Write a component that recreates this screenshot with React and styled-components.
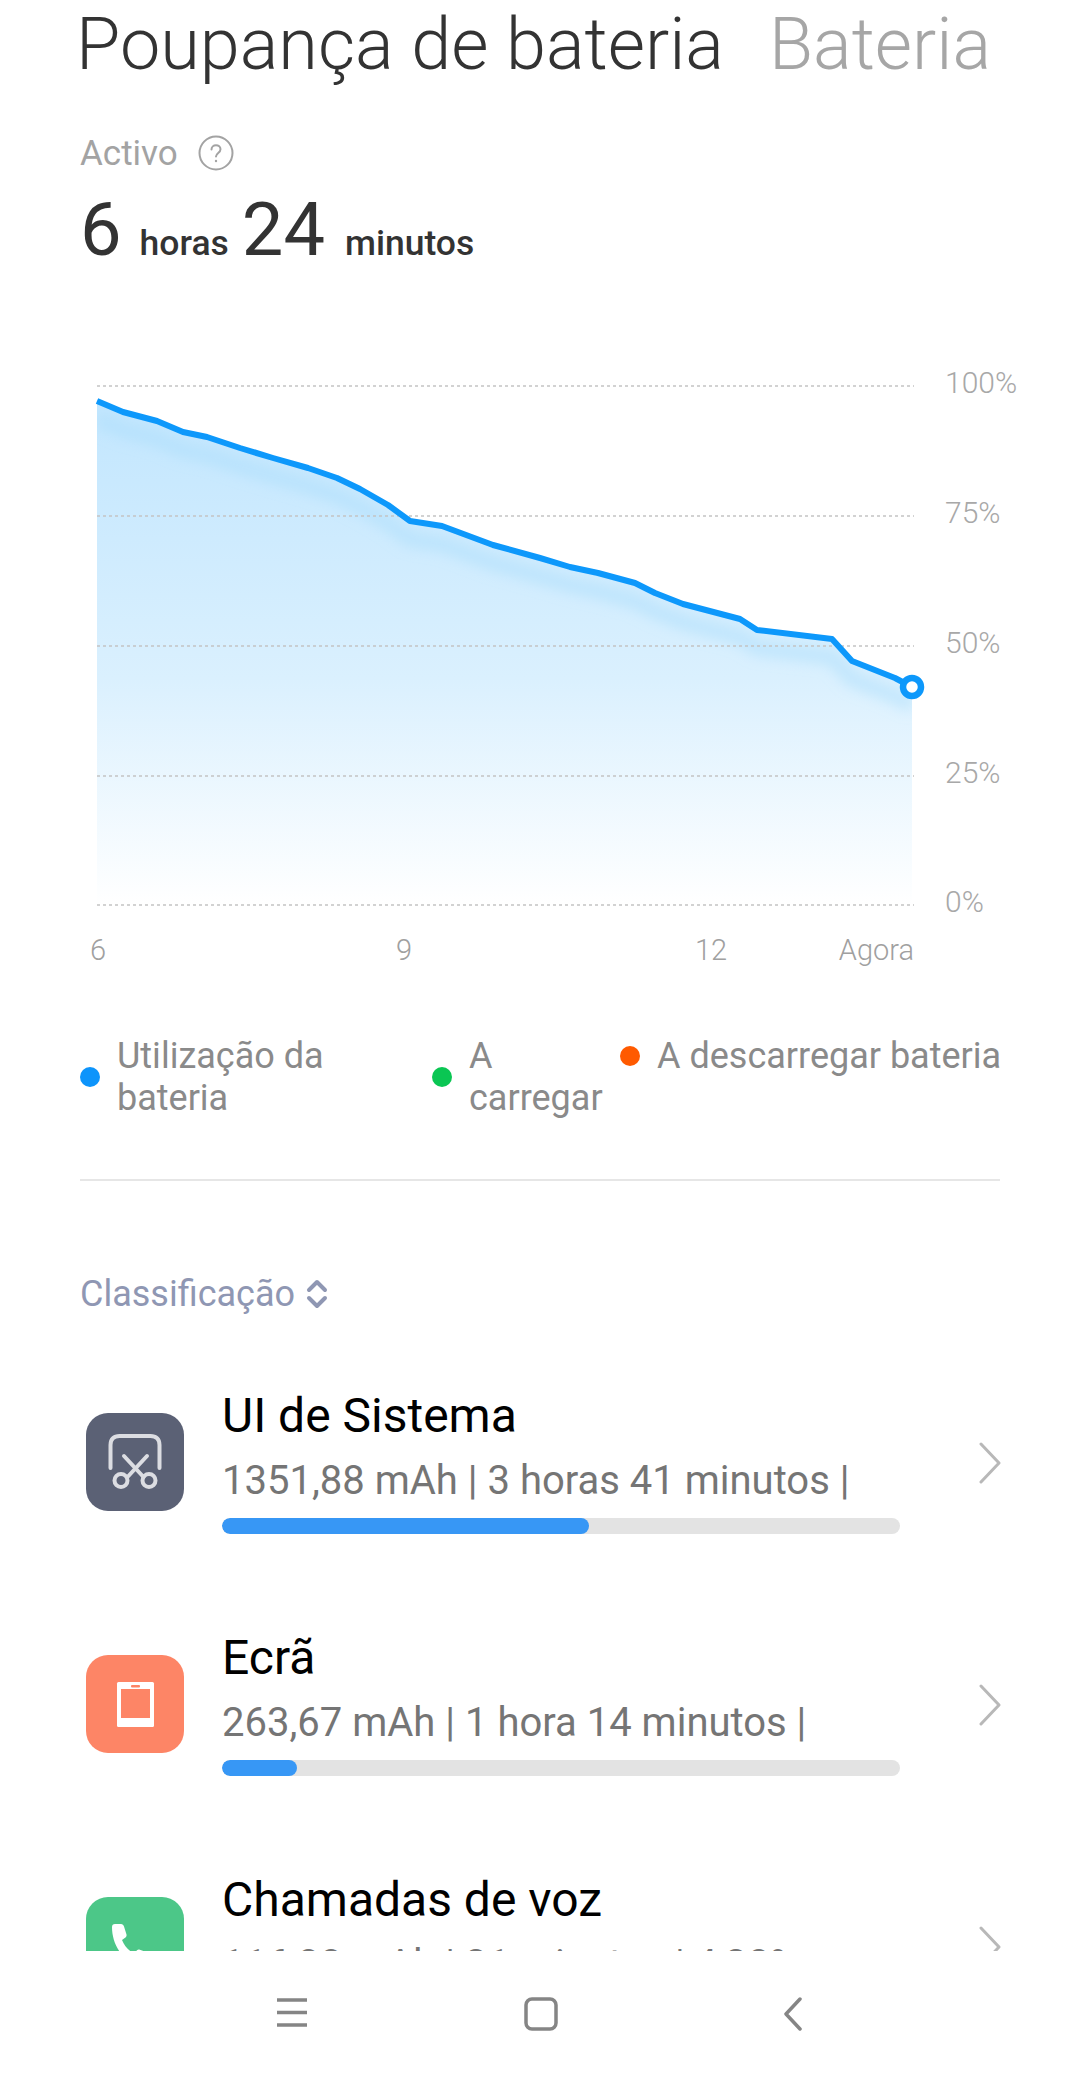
import styled, { createGlobalStyle } from 'styled-components';

const GlobalStyle = createGlobalStyle`
  html, body {
    margin: 0;
    padding: 0;
    background: #fff;
    font-family: Roboto, "Liberation Sans", sans-serif;
  }
`;

const Screen = styled.div`
  width: 1080px;
  height: 2081px;
  display: flex;
  flex-direction: column;
  overflow: hidden;
  background: #fff;
`;

const Content = styled.main`
  height: 1951px;
  overflow: hidden;
  flex: none;
`;

const Header = styled.header`
  display: flex;
  gap: 45px;
  height: 100px;
  padding: 3px 0 0 76px;
  box-sizing: border-box;
`;

const Tab = styled.h1`
  margin: 0;
  font-size: 72px;
  line-height: 84px;
  font-weight: 300;
  white-space: nowrap;
  color: ${(p) => (p.$active ? '#333' : '#a6a6a6')};
`;

const ActiveLabel = styled.div`
  display: flex;
  align-items: center;
  gap: 20px;
  height: 40px;
  margin: 33px 0 0 80px;
  font-size: 35px;
  color: #a3a3a3;
`;

const Duration = styled.div`
  display: flex;
  align-items: baseline;
  height: 90px;
  margin: 12px 0 0 80px;
  color: #333;
`;

const Num = styled.span`
  font-size: 74px;
  line-height: 90px;
  margin-right: ${(p) => p.$gap}px;
`;

const Unit = styled.span`
  font-size: 35.500px;
  font-weight: 500;
  margin-right: ${(p) => p.$gap}px;
`;

const ChartSvg = styled.svg`
  display: block;
  width: 1080px;
  height: 610px;
  margin-top: 95px;
`;

const Legend = styled.div`
  display: flex;
  align-items: flex-start;
  height: 144px;
  margin: 55px 0 0 80px;
`;

const LegendItem = styled.div`
  flex: none;
  display: flex;
  align-items: center;
  gap: 17px;
  width: ${(p) => p.$width}px;
  font-size: 36px;
  line-height: 42px;
  color: #8a8a8a;
`;

const Dot = styled.span`
  flex: none;
  width: 20px;
  height: 20px;
  border-radius: 50%;
  background: ${(p) => p.$color};
`;

const Divider = styled.hr`
  height: 2px;
  margin: 0 80px;
  border: 0;
  background: #e6e6e6;
`;

const SortRow = styled.div`
  display: flex;
  align-items: center;
  gap: 11px;
  height: 48px;
  margin: 89px 0 62px 80px;
  font-size: 36px;
  color: #8f97b3;
`;

const Row = styled.section`
  display: flex;
  align-items: flex-start;
  height: 242px;
  padding-left: 86px;
`;

const AppIcon = styled.div`
  flex: none;
  width: 98px;
  height: 98px;
  margin-top: 33px;
  border-radius: 22px;
  background: ${(p) => p.$color};
  svg {
    display: block;
  }
`;

const RowBody = styled.div`
  flex: none;
  width: 678px;
  margin-left: 38px;
  padding-top: 8px;
`;

const RowTitle = styled.div`
  font-size: 48px;
  line-height: 56px;
  color: #000;
`;

const RowInfo = styled.div`
  margin-top: 13px;
  font-size: 40px;
  line-height: 48px;
  color: #757575;
  white-space: nowrap;
`;

const Track = styled.div`
  height: 16px;
  margin-top: 13px;
  border-radius: 8px;
  background: #e3e3e3;
  overflow: hidden;
`;

const Fill = styled.div`
  height: 100%;
  border-radius: 8px;
  background: #3797f5;
`;

const Chevron = styled.svg`
  flex: none;
  width: 24px;
  height: 42px;
  margin: 62px 0 0 78px;
`;

const NavBar = styled.nav`
  flex: 1;
  display: flex;
  align-items: flex-start;
  padding: 46px 0 0 277px;
  svg {
    display: block;
    flex: none;
  }
`;

const NavSquare = styled.svg`
  margin-left: 217px;
`;

const NavBack = styled.svg`
  margin-left: 225px;
`;

const navColor = '#858585';

const HelpIcon = () => (
  <svg width="36" height="36" viewBox="0 0 36 36" fill="none" stroke="#a3a3a3" strokeWidth="2">
    <circle cx="18" cy="18" r="16.5" />
    <path d="M13.5 14.5c0-2.6 2-4.3 4.5-4.3s4.5 1.6 4.5 4c0 3.6-4.5 3.8-4.5 7.3" strokeLinecap="round" />
    <circle cx="18" cy="26" r="1.2" fill="#a3a3a3" stroke="none" />
  </svg>
);

const SortIcon = () => (
  <svg width="22" height="30" viewBox="0 0 22 30" fill="none" stroke="#8f97b3" strokeWidth="4" strokeLinecap="round" strokeLinejoin="round">
    <path d="M3 11l8-8 8 8" />
    <path d="M3 19l8 8 8-8" />
  </svg>
);

const ScissorsIcon = () => (
  <svg width="98" height="98" viewBox="0 0 98 98" fill="none" stroke="#dcdde2" strokeWidth="4" strokeLinecap="round">
    <path d="M24.5 55V32c0-6 3.500-9 9-9h31c5.500 0 9 3 9 9v23" />
    <path d="M38 43l19.500 21" />
    <path d="M61 43L41.500 64" />
    <circle cx="35" cy="67.500" r="6.500" />
    <circle cx="63" cy="67.500" r="6.500" />
  </svg>
);

const ScreenIcon = () => (
  <svg width="98" height="98" viewBox="0 0 98 98">
    <rect x="31" y="27" width="37" height="45" rx="1.500" fill="#fff" />
    <rect x="35" y="34" width="29" height="29" fill="#fd8566" />
    <rect x="45" y="30" width="9" height="2.500" rx="1" fill="#fd8566" />
  </svg>
);

const PhoneIcon = () => (
  <svg width="98" height="98" viewBox="0 0 98 98">
    <path
      d="M26 30c0-2 1-3 3-3h6c1.500 0 2.500 1 3 2.500l2.500 8c.3 1.200-.1 2.200-1 2.900l-3.500 2.600c2.500 6 6.500 10.500 12 13.500l3-3.200c.8-.8 1.800-1 2.800-.6l7.700 2.800c1.500.5 2.500 1.500 2.500 3v6c0 2-1 3.500-3 3.500C40 70 26 50 26 30z"
      fill="#fff"
    />
  </svg>
);

const points = [
  [97, 401], [123, 412], [157, 421], [183, 432], [207, 437], [240, 448], [273, 458],
  [308, 468], [337, 478], [360, 489], [388, 505], [410, 521], [442, 526], [493, 545],
  [540, 558], [570, 567], [598, 573], [635, 583], [655, 593], [683, 604], [740, 619],
  [757, 630], [832, 639], [852, 661], [895, 678], [912, 687],
];

const linePath = points.map(([x, y], i) => `${i ? 'L' : 'M'}${x} ${y}`).join(' ');
const areaPath = `${linePath} L912 905 L97 905 Z`;

const gridLines = [
  { y: 386, label: '100%', labelX: 945 },
  { y: 516, label: '75%', labelX: 945 },
  { y: 646, label: '50%', labelX: 945 },
  { y: 776, label: '25%', labelX: 945 },
  { y: 905, label: '0%', labelX: 945 },
];

const xLabels = [
  { x: 98, text: '6', anchor: 'middle' },
  { x: 404, text: '9', anchor: 'middle' },
  { x: 711, text: '12', anchor: 'middle' },
  { x: 914, text: 'Agora', anchor: 'end' },
];

const BatteryChart = () => (
  <ChartSvg viewBox="0 370 1080 610">
    <defs>
      <linearGradient id="areaFill" gradientUnits="userSpaceOnUse" x1="0" y1="400" x2="0" y2="905">
        <stop offset="0" stopColor="#c2e6fe" />
        <stop offset="0.55" stopColor="#daf0fe" />
        <stop offset="1" stopColor="#ffffff" />
      </linearGradient>
      <clipPath id="areaClip">
        <path d={areaPath} />
      </clipPath>
      <filter id="bandBlur" x="-5%" y="-20%" width="110%" height="140%">
        <feGaussianBlur stdDeviation="7" />
      </filter>
    </defs>
    <path d={areaPath} fill="url(#areaFill)" />
    <g clipPath="url(#areaClip)">
      <path d={linePath} transform="translate(0 18)" fill="none" stroke="#aadcfc" strokeOpacity="0.55" strokeWidth="14" filter="url(#bandBlur)" />
    </g>
    {gridLines.map((g) => (
      <g key={g.label}>
        <line x1="97" x2="914" y1={g.y} y2={g.y} stroke="#c4c4c4" strokeWidth="1.5" strokeDasharray="3 3" />
        <text x={g.labelX} y={g.y + 7} fontSize="30" fontWeight="300" fill="#a8a8a8" fontFamily="Roboto, sans-serif">
          {g.label}
        </text>
      </g>
    ))}
    {xLabels.map((l) => (
      <text key={l.text} x={l.x} y={960} textAnchor={l.anchor} fontSize="29" fontWeight="300" fill="#a0a0a0" fontFamily="Roboto, sans-serif">
        {l.text}
      </text>
    ))}
    <path d={linePath} fill="none" stroke="#0d98fb" strokeWidth="6" strokeLinejoin="round" />
    <circle cx="912" cy="687" r="9" fill="#fff" stroke="#0d98fb" strokeWidth="6.500" />
  </ChartSvg>
);

const rows = [
  {
    title: 'UI de Sistema',
    info: '1351,88 mAh | 3 horas 41 minutos |',
    color: '#5b6175',
    icon: <ScissorsIcon />,
    pct: 54.2,
  },
  {
    title: 'Ecrã',
    info: '263,67 mAh | 1 hora 14 minutos |',
    color: '#fd8566',
    icon: <ScreenIcon />,
    pct: 11,
  },
  {
    title: 'Chamadas de voz',
    info: '116,88 mAh | 31 minutos | 4,38%',
    color: '#4cc788',
    icon: <PhoneIcon />,
    pct: 5,
  },
];

const App = () => (
  <Screen>
    <GlobalStyle />
    <Content>
      <Header>
        <Tab $active>Poupança de bateria</Tab>
        <Tab>Bateria</Tab>
      </Header>
      <ActiveLabel>
        Activo
        <HelpIcon />
      </ActiveLabel>
      <Duration>
        <Num $gap={18}>6</Num>
        <Unit $gap={13}>horas</Unit>
        <Num $gap={20}>24</Num>
        <Unit>minutos</Unit>
      </Duration>
      <BatteryChart />
      <Legend>
        <LegendItem $width={352}>
          <Dot $color="#0d94fb" />
          <span>Utilização da bateria</span>
        </LegendItem>
        <LegendItem $width={188}>
          <Dot $color="#0ac653" />
          <span>A carregar</span>
        </LegendItem>
        <LegendItem $width={400}>
          <Dot $color="#ff5a00" />
          <span>A descarregar bateria</span>
        </LegendItem>
      </Legend>
      <Divider />
      <SortRow>
        Classificação
        <SortIcon />
      </SortRow>
      {rows.map((row) => (
        <Row key={row.title}>
          <AppIcon $color={row.color}>{row.icon}</AppIcon>
          <RowBody>
            <RowTitle>{row.title}</RowTitle>
            <RowInfo>{row.info}</RowInfo>
            <Track>
              <Fill style={{ width: `${row.pct}%` }} />
            </Track>
          </RowBody>
          <Chevron viewBox="0 0 24 42" fill="none" stroke="#b8b8b8" strokeWidth="3" strokeLinecap="round" strokeLinejoin="round">
            <path d="M3 2l18 19L3 40" />
          </Chevron>
        </Row>
      ))}
    </Content>
    <NavBar>
      <svg width="30" height="30" viewBox="0 0 30 30" stroke={navColor} strokeWidth="3.500">
        <path d="M0 3h30M0 15.500h30M0 28h30" />
      </svg>
      <NavSquare width="34" height="34" viewBox="0 0 34 34" fill="none" stroke={navColor} strokeWidth="3.500">
        <rect x="2" y="2" width="30" height="30" rx="6" />
      </NavSquare>
      <NavBack width="20" height="34" viewBox="0 0 20 34" fill="none" stroke={navColor} strokeWidth="3.500" strokeLinecap="round" strokeLinejoin="round">
        <path d="M17 2L3 17l14 15" />
      </NavBack>
    </NavBar>
  </Screen>
);

export default App;
